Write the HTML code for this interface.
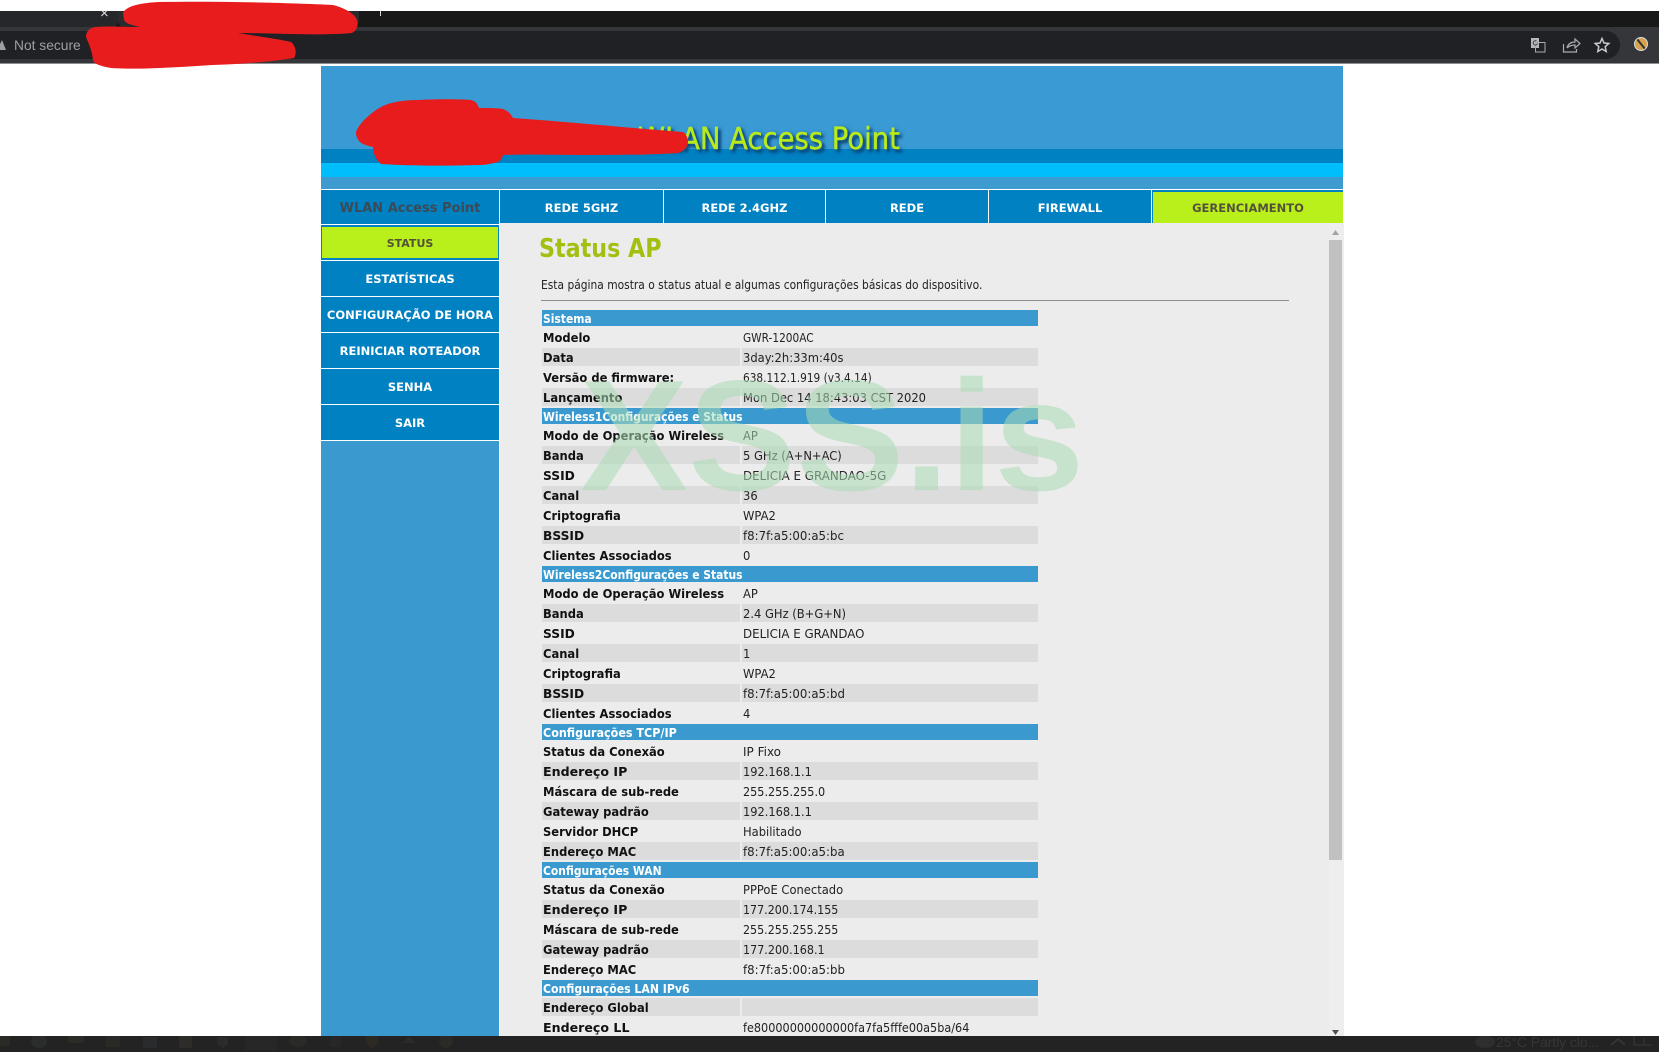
<!DOCTYPE html>
<html lang="pt"><head><meta charset="utf-8"><title>Status AP</title>
<style>
html,body{margin:0;padding:0;background:#fff}
#p{position:relative;width:1659px;height:1052px;overflow:hidden;background:#fff;font-family:"DejaVu Sans","Liberation Sans",sans-serif}
#p div{position:absolute}
.t{display:inline-block;white-space:nowrap;transform-origin:0 50%}
.l,.v{height:18px;line-height:20px;font-size:12px;white-space:nowrap}
.l{left:542px;width:197px;padding-left:1px;font-weight:bold;color:#111}
.v{left:742px;width:295px;padding-left:1px;color:#222}
.l .t{transform:scaleX(.96)}
.v .t{transform:scaleX(.96)}
.f{background:#dcdcdc}
.h{left:542px;width:496px;height:16px;line-height:18px;background:#3a9ad0;color:#fff;font-weight:bold;font-size:12px;padding-left:0;white-space:nowrap}
.h .t{transform:scaleX(.895);margin-left:1px}
.n{background:#0081c2;color:#fff;font-weight:bold;font-size:11.5px;text-align:center;white-space:nowrap}
.s{left:321px;width:178px;height:35px;line-height:37px}
.m{top:190px;height:33px;line-height:36px}
</style></head><body><div id="p">
<!-- browser chrome -->
<div style="left:0;top:11px;width:1659px;height:16px;background:#181818"></div>
<div style="left:0;top:11px;width:118px;height:16px;background:#26272a;border-radius:0 0 6px 0"></div>
<div style="left:118px;top:11px;width:241px;height:16px;background:#2a2b2e;border-radius:0 0 6px 6px"></div>
<div style="left:0;top:27px;width:1659px;height:36px;background:#35363a"></div>
<div style="left:0;top:31px;width:1620px;height:28px;background:#202124;border-radius:0 14px 14px 0"></div>
<div style="left:0;top:63px;width:1659px;height:1px;background:#8d8e90"></div>
<div style="left:100px;top:5px;color:#ddd;font:15px 'Liberation Sans',sans-serif">×</div>
<div style="left:380px;top:11px;width:1px;height:5px;background:#ddd"></div>
<svg style="position:absolute;left:0;top:38px" width="7" height="14"><path d="M-3 12L2 2L6 12Z" fill="#9aa0a6"/></svg>
<div style="left:14px;top:38px;color:#9aa0a6;font:13.8px/16px 'Liberation Sans',sans-serif;white-space:nowrap">Not secure</div>
<svg style="position:absolute;left:1525px;top:33px" width="130" height="24" fill="none">
<rect x="6" y="5" width="8" height="10" fill="#b5b7ba"/><rect x="10.500" y="9.500" width="9.500" height="9.500" stroke="#a8abad" stroke-width="1"/>
<path d="M11.500 8a2.200 2.200 0 1 0 1 2.500" stroke="#444" stroke-width="1"/>
<path d="M38.500 11v8h13v-3M42 15c1-4 4-6 8-6V6l5 4.500-5 4.500v-3c-3 0-6 1-8 3" stroke="#a9abae" stroke-width="1.200"/>
<path d="M77 5.500l2 4.500 4.800.5-3.600 3.200 1 4.800L77 16l-4.200 2.500 1-4.800-3.600-3.200 4.800-.5z" stroke="#c9cacc" stroke-width="1.500"/>
<circle cx="116" cy="11" r="6.500" fill="#d5a24e"/><path d="M112 6l8 10" stroke="#333" stroke-width="2"/><circle cx="116" cy="11" r="6.500" stroke="#ddd" stroke-width="1"/>
</svg>
<!-- header -->
<div style="left:321px;top:66px;width:1022px;height:123px;background:#3a9ad3"></div>
<div style="left:321px;top:149px;width:1022px;height:14px;background:#0081c2"></div>
<div style="left:321px;top:163px;width:1022px;height:14px;background:#00bdfb"></div>
<div style="left:321px;top:177px;width:1022px;height:12px;background:#3d9bd0"></div>
<div style="left:638px;top:122px;font-size:30px;line-height:36px;color:#b9ea1c;-webkit-text-stroke:.4px #b9ea1c;white-space:nowrap;transform:scaleX(.915);transform-origin:0 50%;text-shadow:3px 3px 3px #0a4678,2px 2px 5px #0a4678">WLAN Access Point</div>
<!-- nav -->
<div class="n m" style="left:321px;width:178px;height:34px;color:#3d4a55;font-size:13px;line-height:38px">WLAN Access Point</div>
<div class="n m" style="left:500px;width:163px">REDE 5GHZ</div>
<div class="n m" style="left:664px;width:161px">REDE 2.4GHZ</div>
<div class="n m" style="left:826px;width:162px">REDE</div>
<div class="n m" style="left:989px;width:162px">FIREWALL</div>
<div class="n m" style="left:1152px;width:191px"></div>
<div class="n" style="left:1153px;top:192px;width:190px;height:31px;line-height:32px;background:#b9f01c;color:#55503a">GERENCIAMENTO</div>
<!-- sidebar -->
<div style="left:321px;top:224px;width:178px;height:812px;background:#3a9ad0"></div>
<div style="left:321px;top:224px;width:178px;height:1px;background:#fff"></div>
<div class="n" style="left:321px;top:225px;width:178px;height:35px;background:#0081c2"></div>
<div class="n" style="left:322px;top:227px;width:176px;height:31px;line-height:33px;background:#b9f01c;color:#55503a;font-size:11px">STATUS</div>
<div style="left:321px;top:260px;width:178px;height:181px;background:#fff"></div>
<div class="n s" style="top:261px">ESTATÍSTICAS</div>
<div class="n s" style="top:297px">CONFIGURAÇÃO DE HORA</div>
<div class="n s" style="top:333px">REINICIAR ROTEADOR</div>
<div class="n s" style="top:369px">SENHA</div>
<div class="n s" style="top:405px">SAIR</div>
<!-- content -->
<div style="left:500px;top:223px;width:844px;height:813px;background:#ececec"></div>
<div style="left:1329px;top:223px;width:15px;height:813px;background:#eeeeee"></div>
<div style="left:1329px;top:240px;width:13px;height:620px;background:#c1c1c1"></div>
<svg style="position:absolute;left:1330px;top:228px" width="12" height="808"><path d="M2 7L5.500 2L9 7Z" fill="#a3a3a3"/><path d="M2 802L5.500 807L9 802Z" fill="#505050"/></svg>
<div style="left:539px;top:233px;font-size:26px;line-height:32px;font-weight:bold;color:#a3bf10;white-space:nowrap;transform:scaleX(.855);transform-origin:0 50%">Status AP</div>
<div style="left:541px;top:276px;font-size:12px;line-height:18px;color:#222;white-space:nowrap;transform:scaleX(.89);transform-origin:0 50%">Esta página mostra o status atual e algumas configurações básicas do dispositivo.</div>
<div style="left:541px;top:300px;width:748px;height:1px;background:#8e8e8e"></div>

<div class="h" style="top:310px"><span class="t">Sistema</span></div>
<div class="l" style="top:328px"><span class="t">Modelo</span></div><div class="v" style="top:328px"><span class="t" style="transform:scaleX(.88)">GWR-1200AC</span></div>
<div class="l f" style="top:348px"><span class="t">Data</span></div><div class="v f" style="top:348px"><span class="t">3day:2h:33m:40s</span></div>
<div class="l" style="top:368px"><span class="t">Versão de firmware:</span></div><div class="v" style="top:368px"><span class="t" style="transform:scaleX(.88)">638.112.1.919 (v3.4.14)</span></div>
<div class="l f" style="top:388px"><span class="t">Lançamento</span></div><div class="v f" style="top:388px"><span class="t">Mon Dec 14 18:43:03 CST 2020</span></div>

<div class="h" style="top:408px"><span class="t">Wireless1Configurações e Status</span></div>
<div class="l" style="top:426px"><span class="t">Modo de Operação Wireless</span></div><div class="v" style="top:426px"><span class="t">AP</span></div>
<div class="l f" style="top:446px"><span class="t">Banda</span></div><div class="v f" style="top:446px"><span class="t">5 GHz (A+N+AC)</span></div>
<div class="l" style="top:466px"><span class="t" style="transform:scaleX(1.02)">SSID</span></div><div class="v" style="top:466px"><span class="t" style="transform:scaleX(.99)">DELICIA E GRANDAO-5G</span></div>
<div class="l f" style="top:486px"><span class="t">Canal</span></div><div class="v f" style="top:486px"><span class="t">36</span></div>
<div class="l" style="top:506px"><span class="t">Criptografia</span></div><div class="v" style="top:506px"><span class="t">WPA2</span></div>
<div class="l f" style="top:526px"><span class="t" style="transform:scaleX(1.02)">BSSID</span></div><div class="v f" style="top:526px"><span class="t" style="transform:scaleX(.98)">f8:7f:a5:00:a5:bc</span></div>
<div class="l" style="top:546px"><span class="t">Clientes Associados</span></div><div class="v" style="top:546px"><span class="t">0</span></div>

<div class="h" style="top:566px"><span class="t">Wireless2Configurações e Status</span></div>
<div class="l" style="top:584px"><span class="t">Modo de Operação Wireless</span></div><div class="v" style="top:584px"><span class="t">AP</span></div>
<div class="l f" style="top:604px"><span class="t">Banda</span></div><div class="v f" style="top:604px"><span class="t">2.4 GHz (B+G+N)</span></div>
<div class="l" style="top:624px"><span class="t" style="transform:scaleX(1.02)">SSID</span></div><div class="v" style="top:624px"><span class="t" style="transform:scaleX(.986)">DELICIA E GRANDAO</span></div>
<div class="l f" style="top:644px"><span class="t">Canal</span></div><div class="v f" style="top:644px"><span class="t">1</span></div>
<div class="l" style="top:664px"><span class="t">Criptografia</span></div><div class="v" style="top:664px"><span class="t">WPA2</span></div>
<div class="l f" style="top:684px"><span class="t" style="transform:scaleX(1.02)">BSSID</span></div><div class="v f" style="top:684px"><span class="t" style="transform:scaleX(.98)">f8:7f:a5:00:a5:bd</span></div>
<div class="l" style="top:704px"><span class="t">Clientes Associados</span></div><div class="v" style="top:704px"><span class="t">4</span></div>

<div class="h" style="top:724px"><span class="t" style="transform:scaleX(.93)">Configurações TCP/IP</span></div>
<div class="l" style="top:742px"><span class="t">Status da Conexão</span></div><div class="v" style="top:742px"><span class="t" style="transform:scaleX(1)">IP Fixo</span></div>
<div class="l f" style="top:762px"><span class="t" style="transform:scaleX(1.05)">Endereço IP</span></div><div class="v f" style="top:762px"><span class="t" style="transform:scaleX(.95)">192.168.1.1</span></div>
<div class="l" style="top:782px"><span class="t">Máscara de sub-rede</span></div><div class="v" style="top:782px"><span class="t" style="transform:scaleX(.936)">255.255.255.0</span></div>
<div class="l f" style="top:802px"><span class="t">Gateway padrão</span></div><div class="v f" style="top:802px"><span class="t" style="transform:scaleX(.95)">192.168.1.1</span></div>
<div class="l" style="top:822px"><span class="t">Servidor DHCP</span></div><div class="v" style="top:822px"><span class="t">Habilitado</span></div>
<div class="l f" style="top:842px"><span class="t">Endereço MAC</span></div><div class="v f" style="top:842px"><span class="t" style="transform:scaleX(.98)">f8:7f:a5:00:a5:ba</span></div>

<div class="h" style="top:862px"><span class="t">Configurações WAN</span></div>
<div class="l" style="top:880px"><span class="t">Status da Conexão</span></div><div class="v" style="top:880px"><span class="t">PPPoE Conectado</span></div>
<div class="l f" style="top:900px"><span class="t" style="transform:scaleX(1.05)">Endereço IP</span></div><div class="v f" style="top:900px"><span class="t" style="transform:scaleX(.925)">177.200.174.155</span></div>
<div class="l" style="top:920px"><span class="t">Máscara de sub-rede</span></div><div class="v" style="top:920px"><span class="t" style="transform:scaleX(.925)">255.255.255.255</span></div>
<div class="l f" style="top:940px"><span class="t">Gateway padrão</span></div><div class="v f" style="top:940px"><span class="t" style="transform:scaleX(.93)">177.200.168.1</span></div>
<div class="l" style="top:960px"><span class="t">Endereço MAC</span></div><div class="v" style="top:960px"><span class="t" style="transform:scaleX(.98)">f8:7f:a5:00:a5:bb</span></div>

<div class="h" style="top:980px"><span class="t" style="transform:scaleX(.91)">Configurações LAN IPv6</span></div>
<div class="l f" style="top:998px"><span class="t">Endereço Global</span></div><div class="v f" style="top:998px"></div>
<div class="l" style="top:1018px"><span class="t" style="transform:scaleX(1.05)">Endereço LL</span></div><div class="v" style="top:1018px"><span class="t" style="transform:scaleX(.938)">fe80000000000000fa7fa5fffe00a5ba/64</span></div>

<!-- watermark -->
<div style="left:580px;top:342px;font-family:'Liberation Sans',sans-serif;font-weight:bold;font-size:162px;line-height:186px;color:rgba(171,221,180,.55);white-space:nowrap;transform:scaleY(.974);transform-origin:0 148px">XSS.is</div>

<!-- taskbar -->
<div style="left:0;top:1036px;width:1659px;height:16px;background:#232323"></div>
<svg style="position:absolute;left:0;top:1036px" width="1659" height="16">
<rect x="0" y="0" width="10" height="10" fill="#2c2a26"/><ellipse cx="39" cy="5" rx="8" ry="7" fill="#2a2d2b"/><rect x="68" y="0" width="16" height="7" fill="#2d2b27"/><rect x="106" y="0" width="14" height="11" fill="#2b2926"/><rect x="143" y="1" width="14" height="11" fill="#292b2d"/><rect x="179" y="0" width="13" height="12" fill="#2d2c28"/><path d="M217 1h11v7l-5 4-6-4z" fill="#2b2b2b"/><rect x="245" y="0" width="32" height="14" fill="#272727"/><ellipse cx="298" cy="5" rx="9" ry="6" fill="#2a2b27"/><rect x="330" y="0" width="11" height="11" fill="#272727"/><path d="M366 0h12v7l-6 6-6-6z" fill="#2d2923"/><path d="M403 7l6-7 6 7z" fill="#2b2a26"/><ellipse cx="446" cy="5" rx="7" ry="7" fill="#2a2a27"/>
<ellipse cx="1485" cy="6" rx="10" ry="6" fill="#2e2e2e"/>
<text x="1496" y="11" font-family="Liberation Sans" font-size="14" fill="#363636" textLength="103">25°C  Partly clo...</text>
<path d="M1611 9l7-6 7 6" stroke="#383838" fill="none" stroke-width="1.500"/>
<path d="M1634 0v9h18M1644 2v7" stroke="#383838" fill="none"/>
</svg>

<!-- red scribbles -->
<svg style="position:absolute;left:0;top:0" width="1659" height="1052">
<path fill="#e81c1c" d="M123 13C126 6 140 3 159 2C220 1 290 3 333 5C345 8 355 14 357 20C359 26 356 31 352 33C320 36 270 33 238 33C255 36 280 39 291 42C296 46 297 54 294 58C270 62 240 64 212 65C180 67 140 70 111 68C100 66 94 64 93 60C92 50 88 42 86 37C86 31 90 28 95 27C110 26 125 27 140 27C132 25 126 24 124 20Z"/>
<path fill="#e81c1c" d="M356 132C358 125 370 113 381 107C390 102 405 100 418 100C435 99 460 99 471 100C476 101 478 105 479 108C488 108 497 108 503 109C508 111 511 114 513 118C570 122 630 128 683 132C687 135 688 139 688 142C688 147 684 151 678 153C650 155 615 155 582 155C555 155 530 154 503 155C502 159 500 161 498 162C490 164 485 165 479 165C445 166 410 166 381 164C376 160 373 153 373 147C368 146 362 144 360 142C357 139 356 136 356 132Z"/>
</svg>
</div></body></html>
